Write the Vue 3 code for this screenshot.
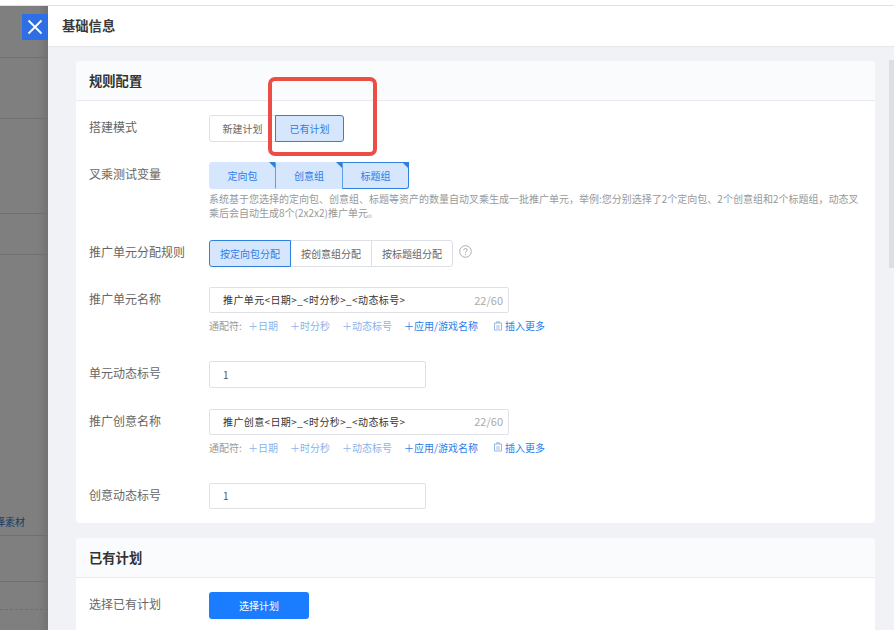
<template>
  <div class="page">
    <div class="top-strip"></div>
    <div class="stage">
      <aside class="backdrop">
        <div class="backdrop__row" style="height: 52px"></div>
        <div class="backdrop__row" style="height: 61px"></div>
        <div class="backdrop__row" style="height: 95px"></div>
        <div class="backdrop__row" style="height: 41px"></div>
        <div class="backdrop__row backdrop__row--link" style="height: 281px"><span>择素材</span></div>
        <div class="backdrop__row" style="height: 46px"></div>
        <div class="backdrop__row backdrop__row--dashed" style="height: 28px"></div>
        <button class="backdrop__close">
          <svg width="16" height="16" viewBox="0 0 16 16" fill="none" stroke="#fff" stroke-width="1.8">
            <path d="M1.5 1.5l13 13M14.5 1.5l-13 13" />
          </svg>
        </button>
      </aside>

      <section class="drawer">
        <header class="drawer__head">基础信息</header>
        <div class="drawer__body">
          <main class="drawer__main">
            <div class="card">
              <div class="card__title">规则配置</div>
              <div class="card__body">
                <div class="row row--mode">
                  <label class="row__label">搭建模式</label>
                  <div class="seg">
                    <span class="seg__btn seg__btn--mode">新建计划</span>
                    <span class="seg__btn seg__btn--mode seg__btn--on">已有计划</span>
                  </div>
                </div>

                <div class="row row--cross">
                  <label class="row__label">叉乘测试变量</label>
                  <div class="row__ctrl">
                    <div class="seg">
                      <span
                        v-for="item in crossVars"
                        :key="item.text"
                        class="seg__btn seg__btn--cross"
                        :class="{ 'seg__btn--strong': item.strong }"
                      >{{ item.text }}</span>
                    </div>
                    <p class="help">系统基于您选择的定向包、创意组、标题等资产的数量自动叉乘生成一批推广单元，举例:您分别选择了2个定向包、2个创意组和2个标题组，动态叉<br />乘后会自动生成8个(2x2x2)推广单元。</p>
                  </div>
                </div>

                <div class="row row--rule">
                  <label class="row__label">推广单元分配规则</label>
                  <div class="seg">
                    <span class="seg__btn seg__btn--rule seg__btn--on">按定向包分配</span>
                    <span class="seg__btn seg__btn--rule">按创意组分配</span>
                    <span class="seg__btn seg__btn--rule">按标题组分配</span>
                  </div>
                  <svg class="help-icon" width="13" height="13" viewBox="0 0 13 13" fill="none" stroke="#999">
                    <circle cx="6.5" cy="6.5" r="5.8" stroke-width="0.8" />
                    <path d="M4.8 5.1c0-1 .8-1.6 1.7-1.6s1.7.6 1.7 1.5c0 1.3-1.7 1.3-1.7 2.6" stroke-width="0.9" />
                    <path d="M6.5 8.8v1" stroke-width="1" />
                  </svg>
                </div>

                <div class="row row--name">
                  <label class="row__label">推广单元名称</label>
                  <div class="row__ctrl">
                    <div class="field field--wide">
                      <span class="field__text">推广单元&lt;日期&gt;_&lt;时分秒&gt;_&lt;动态标号&gt;</span>
                      <span class="field__count">22/60</span>
                    </div>
                    <div class="tags">
                      <span class="tags__lead">通配符:</span>
                      <a v-for="t in tags" :key="t.text" class="tags__item" :class="{ 'tags__item--dark': t.dark }">＋{{ t.text }}</a>
                      <a class="tags__more">
                        <svg width="10" height="10" viewBox="0 0 10 10" fill="none" stroke="#7fa8dc" stroke-width="0.8">
                          <path d="M1.5 2h7v7h-7zM3.5 2V.8h3V2M3.2 5h3.6M3.2 7h3.6" />
                        </svg>
                        插入更多
                      </a>
                    </div>
                  </div>
                </div>

                <div class="row row--unit-no">
                  <label class="row__label">单元动态标号</label>
                  <div class="field field--num">1</div>
                </div>

                <div class="row row--name">
                  <label class="row__label">推广创意名称</label>
                  <div class="row__ctrl">
                    <div class="field field--wide">
                      <span class="field__text">推广创意&lt;日期&gt;_&lt;时分秒&gt;_&lt;动态标号&gt;</span>
                      <span class="field__count">22/60</span>
                    </div>
                    <div class="tags">
                      <span class="tags__lead">通配符:</span>
                      <a v-for="t in tags" :key="t.text" class="tags__item" :class="{ 'tags__item--dark': t.dark }">＋{{ t.text }}</a>
                      <a class="tags__more">
                        <svg width="10" height="10" viewBox="0 0 10 10" fill="none" stroke="#7fa8dc" stroke-width="0.8">
                          <path d="M1.5 2h7v7h-7zM3.5 2V.8h3V2M3.2 5h3.6M3.2 7h3.6" />
                        </svg>
                        插入更多
                      </a>
                    </div>
                  </div>
                </div>

                <div class="row row--last">
                  <label class="row__label">创意动态标号</label>
                  <div class="field field--num">1</div>
                </div>
              </div>
            </div>

            <div class="card card--plan">
              <div class="card__title">已有计划</div>
              <div class="card__body">
                <div class="row">
                  <label class="row__label">选择已有计划</label>
                  <button class="primary">选择计划</button>
                </div>
              </div>
            </div>
          </main>
          <div class="scrollbar"><div class="scrollbar__thumb"></div></div>
        </div>
      </section>
    </div>
    <div class="annotation"></div>
  </div>
</template>

<script setup>
const crossVars = [
  { text: '定向包' },
  { text: '创意组' },
  { text: '标题组', strong: true },
];

const tags = [
  { text: '日期' },
  { text: '时分秒' },
  { text: '动态标号' },
  { text: '应用/游戏名称', dark: true },
];
</script>

<style>
html,
body {
  margin: 0;
  overflow: hidden;
}
</style>

<style scoped>
.page {
  position: relative;
  width: 894px;
  height: 630px;
  overflow: hidden;
  display: flex;
  flex-direction: column;
  background: #fff;
  font-family: "Noto Sans CJK SC", "Liberation Sans", sans-serif;
}
.top-strip {
  height: 5px;
  flex-shrink: 0;
  background: #fff;
  border-bottom: 1px solid #e2e2e2;
}
.stage {
  flex: 1;
  min-height: 0;
  display: flex;
}

.backdrop {
  position: relative;
  width: 48px;
  flex-shrink: 0;
  background: linear-gradient(90deg, #7f7f7f 0, #7f7f7f 38px, #727272 48px);
}
.backdrop__row {
  border-bottom: 1px solid #6f6f6f;
  box-sizing: border-box;
}
.backdrop__row--dashed {
  border-bottom: 1px dashed #6f6f6f;
}
.backdrop__row--link {
  display: flex;
  align-items: flex-end;
  padding-bottom: 6px;
  font-size: 10px;
  line-height: 14px;
  color: #1b3a6b;
  white-space: nowrap;
}
.backdrop__row--link span {
  margin-left: -5px;
}
.backdrop__close {
  position: absolute;
  top: 8px;
  left: 22px;
  width: 26px;
  height: 26px;
  padding: 0;
  border: none;
  background: #2f6fe6;
  display: flex;
  align-items: center;
  justify-content: center;
}

.drawer {
  flex: 1;
  min-width: 0;
  display: flex;
  flex-direction: column;
}
.drawer__head {
  height: 40px;
  flex-shrink: 0;
  padding-left: 14px;
  background: #fff;
  border-bottom: 1px solid #e6e8eb;
  font-size: 13.3px;
  font-weight: 700;
  line-height: 40px;
  color: #3a3a3a;
}
.drawer__body {
  flex: 1;
  min-height: 0;
  display: flex;
  background: #f0f2f5;
}
.drawer__main {
  width: 799px;
  margin-left: 28px;
  padding-top: 14px;
}
.scrollbar {
  width: 5px;
  margin-left: 14px;
  padding-top: 13px;
}
.scrollbar__thumb {
  height: 208px;
  background: #dcdee2;
}

.card {
  background: #fff;
  border-radius: 4px;
}
.card--plan {
  margin-top: 15px;
}
.card__title {
  height: 39px;
  padding-left: 13px;
  background: #fafbfd;
  border-bottom: 1px solid #e8eaee;
  border-radius: 4px 4px 0 0;
  font-size: 13.3px;
  font-weight: 700;
  line-height: 39px;
  color: #333;
}
.card__body {
  padding: 14px 13px 14px;
}

.row {
  display: flex;
  align-items: flex-start;
}
.row--mode,
.row--cross,
.row--rule {
  margin-bottom: 20px;
}
.row--name {
  margin-bottom: 23px;
}
.row--unit-no {
  margin-bottom: 20.5px;
}
.row__label {
  width: 120px;
  flex-shrink: 0;
  font-size: 12px;
  line-height: 23px;
  color: #666;
}
.row__ctrl {
  min-width: 0;
  flex: 1;
}

.seg {
  display: flex;
}
.seg__btn {
  position: relative;
  box-sizing: border-box;
  height: 27px;
  margin-left: -1px;
  border: 1px solid #dcdfe6;
  background: #fff;
  font-size: 10px;
  line-height: 25px;
  text-align: center;
  color: #666;
}
.seg__btn:first-child {
  margin-left: 0;
  border-radius: 3px 0 0 3px;
}
.seg__btn:last-child {
  border-radius: 0 3px 3px 0;
}
.seg__btn--mode {
  width: 67px;
}
.seg__btn--mode:last-child {
  width: 69px;
}
.seg__btn--rule {
  width: 82px;
}
.seg__btn--on {
  z-index: 1;
  background: #d6e7fd;
  border-color: #2f7fdc;
  color: #2b7de9;
}
.seg__btn--cross {
  width: 67px;
  background: #d6e7fd;
  border-color: #d6e7fd;
  color: #2b7de9;
}
.seg__btn--cross:nth-child(2) {
  width: 68px;
}
.seg__btn--cross + .seg__btn--cross {
  border-left-color: #5c9de6;
}
.seg__btn--strong {
  z-index: 1;
  border-color: #2f7fdc;
}
.seg__btn--cross::after {
  content: "";
  position: absolute;
  top: -1px;
  right: -1px;
  border-top: 7px solid #2f7fdc;
  border-left: 7px solid transparent;
}

.help {
  margin: 3px 0 0;
  font-size: 10px;
  line-height: 14px;
  color: #999;
  white-space: nowrap;
}
.help-icon {
  margin: 5px 0 0 6px;
}

.field {
  box-sizing: border-box;
  display: flex;
  align-items: center;
  justify-content: space-between;
  border: 1px solid #dfe1e6;
  border-radius: 2px;
  padding: 0 5px 1px 13px;
  background: #fff;
  font-size: 10px;
  color: #333;
}
.field--wide {
  width: 300px;
  height: 26px;
}
.field--num {
  width: 217px;
  height: 27px;
  color: #555;
}
.row--last .field--num {
  height: 26px;
}
.field__text {
  white-space: nowrap;
  letter-spacing: 0.38px;
}
.field__count {
  font-size: 11px;
  color: #aaa;
}

.tags {
  display: flex;
  align-items: center;
  height: 25px;
  font-size: 10px;
  white-space: nowrap;
}
.tags__lead {
  width: 39px;
  color: #999;
}
.tags__item {
  margin-right: 12px;
  color: #8ab4ea;
}
.tags__item--dark {
  color: #2b7de9;
}
.tags__more {
  display: flex;
  align-items: center;
  gap: 2px;
  margin-left: 3px;
  color: #2b7de9;
}

.primary {
  width: 100px;
  height: 27px;
  padding: 0;
  border: none;
  border-radius: 3px;
  background: #1a7cff;
  font-family: inherit;
  font-size: 10px;
  color: #fff;
}

/* red box drawn over the shot */
.annotation {
  position: absolute;
  left: 268px;
  top: 77px;
  width: 109px;
  height: 79px;
  box-sizing: border-box;
  border: 4.5px solid #ee4d45;
  border-radius: 7px;
  pointer-events: none;
}
</style>
